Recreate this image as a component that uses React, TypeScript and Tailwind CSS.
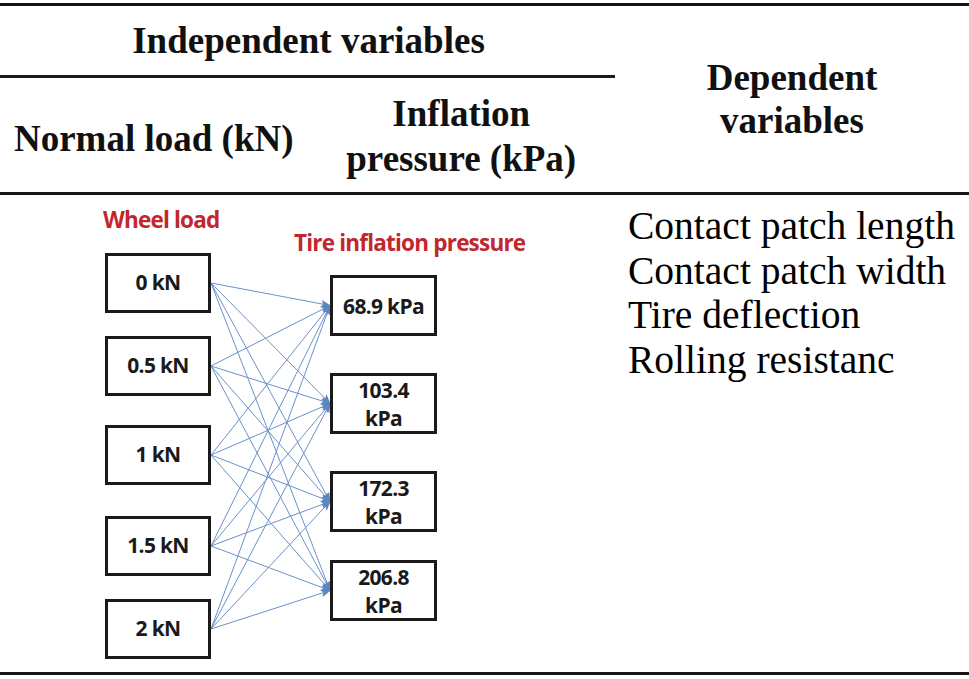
import React from "react";

const leftBoxes = [
  { label: "0 kN", top: 58 },
  { label: "0.5 kN", top: 141 },
  { label: "1 kN", top: 230 },
  { label: "1.5 kN", top: 321 },
  { label: "2 kN", top: 404 },
];

const rightBoxes = [
  { lines: ["68.9 kPa"], top: 80 },
  { lines: ["103.4", "kPa"], top: 178 },
  { lines: ["172.3", "kPa"], top: 276 },
  { lines: ["206.8", "kPa"], top: 365 },
];

function Diagram() {
  const lx = 211;
  const rx = 330;
  const lefts = leftBoxes.map((b) => b.top + 30);
  const rights = rightBoxes.map((b) => b.top + 30.5);
  return (
    <div className="relative w-[615px] h-full" style={{ fontFamily: '"Open Sans", "Noto Sans", sans-serif' }}>
      <div className="absolute left-[103px] top-[14px] text-[22.5px] font-bold text-[#c1272d] tracking-[-0.8px] leading-none whitespace-nowrap">
        Wheel load
      </div>
      <div className="absolute left-[294px] top-[37px] text-[22.5px] font-bold text-[#c1272d] tracking-[-0.8px] leading-none whitespace-nowrap">
        Tire inflation pressure
      </div>
      <svg className="absolute left-0 top-0" width="615" height="478">
        <defs>
          <marker id="ah" markerWidth="10" markerHeight="8" refX="9" refY="4" orient="auto" markerUnits="userSpaceOnUse">
            <path d="M0,0 L10,4 L0,8 L2,4 Z" fill="#5b86c0" />
          </marker>
        </defs>
        {lefts.map((ly, i) =>
          rights.map((ry, j) => (
            <line
              key={`${i}-${j}`}
              x1={lx}
              y1={ly}
              x2={rx}
              y2={ry}
              stroke="#6a92c8"
              strokeWidth="1"
              markerEnd="url(#ah)"
            />
          ))
        )}
      </svg>
      {leftBoxes.map((b) => (
        <div
          key={b.label}
          className="absolute left-[105px] w-[106px] h-[60px] border-[3px] border-[#1a1a1a] bg-white flex items-center justify-center text-[21px] font-bold text-[#1a1a1a] tracking-[-0.7px]"
          style={{ top: b.top }}
        >
          {b.label}
        </div>
      ))}
      {rightBoxes.map((b) => (
        <div
          key={b.lines.join()}
          className="absolute left-[330px] w-[107px] h-[61px] border-[3px] border-[#1a1a1a] bg-white flex flex-col items-center justify-center text-[21px] font-bold text-[#1a1a1a] leading-[28px] tracking-[-0.7px] whitespace-nowrap"
          style={{ top: b.top }}
        >
          {b.lines.map((l) => (
            <span key={l}>{l}</span>
          ))}
        </div>
      ))}
    </div>
  );
}

export default function App() {
  return (
    <div
      className="w-[969px] h-[679px] bg-white pt-[3px] text-[#111]"
      style={{ fontFamily: '"Liberation Serif", "Times New Roman", serif' }}
    >
      <div className="h-[3px] bg-[#161616]" />
      <div className="flex h-[186px]">
        <div className="w-[615px] flex flex-col">
          <div className="h-[69px] flex items-center justify-center text-[37px] font-bold leading-none pl-[2px]">
            Independent variables
          </div>
          <div className="h-[3px] bg-[#1a1a1a]" />
          <div className="flex-1 grid grid-cols-2">
            <div className="flex items-center justify-center text-[37px] font-bold leading-none pt-[6px]">
              Normal load (kN)
            </div>
            <div className="flex items-center justify-center text-center text-[37px] font-bold leading-[45px] pt-[2px]">
              Inflation
              <br />
              pressure (kPa)
            </div>
          </div>
        </div>
        <div className="flex-1 flex items-center justify-center text-center text-[37px] font-bold leading-[43px] pb-[1px]">
          Dependent
          <br />
          variables
        </div>
      </div>
      <div className="h-[3px] bg-[#161616]" />
      <div className="flex h-[477px]">
        <Diagram />
        <div className="flex-1 pl-[13px] pt-[9px] text-[39.5px] leading-[44.5px] text-black whitespace-nowrap">
          <div>Contact patch length</div>
          <div>Contact patch width</div>
          <div>Tire deflection</div>
          <div>Rolling resistanc</div>
        </div>
      </div>
      <div className="h-[3px] bg-[#161616]" />
    </div>
  );
}
